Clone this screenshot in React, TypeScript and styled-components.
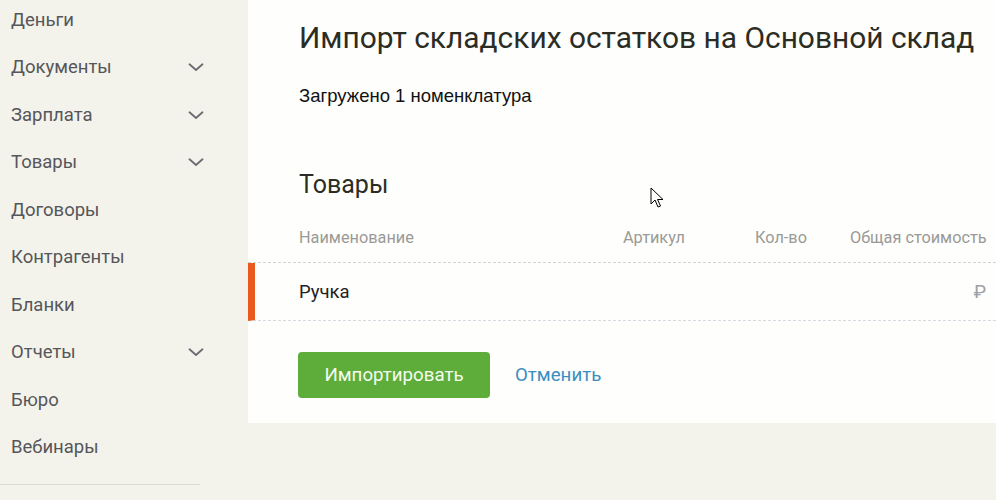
import React from "react";
import styled, { createGlobalStyle } from "styled-components";

const Global = createGlobalStyle`
  html, body { margin: 0; padding: 0; }
  body {
    background: #f3f3eb;
    font-family: Roboto, "Noto Sans", Arial, sans-serif;
    width: 996px;
    height: 500px;
    overflow: hidden;
  }
`;

const Page = styled.div`
  display: flex;
  align-items: flex-start;
  height: 500px;
  position: relative;
`;

const Sidebar = styled.nav`
  width: 248px;
  flex-shrink: 0;
  display: flex;
  flex-direction: column;
`;

const NavList = styled.div`
  width: 200px;
  display: flex;
  flex-direction: column;
  margin-top: -4px;
  border-bottom: 1px solid #dcdcd4;
  padding-bottom: 13px;
`;

const NavItem = styled.div`
  height: 47.5px;
  display: flex;
  align-items: center;
  justify-content: space-between;
  padding-left: 11px;
  box-sizing: border-box;
  font-size: 18.5px;
  color: #56565a;
`;

const Chevron = styled.svg`
  width: 20px;
  height: 20px;
  margin-right: -6px;
  color: #6c6c74;
`;

const Main = styled.main`
  flex: 1;
  background: #fefefc;
  height: 423px;
  display: flex;
  flex-direction: column;
`;

const Inner = styled.div`
  padding-left: 51px;
  display: flex;
  flex-direction: column;
`;

const Title = styled.h1`
  margin: 21px 0 0;
  font-size: 29.9px;
  font-weight: 400;
  color: #2b2d24;
  line-height: 34px;
  white-space: nowrap;
`;

const Subtitle = styled.p`
  margin: 30px 0 0;
  font-size: 18.5px;
  color: #111;
  line-height: 22px;
  font-family: "Liberation Sans", Arial, sans-serif;
`;

const SectionTitle = styled.h2`
  margin: 63px 0 0;
  font-size: 25px;
  font-weight: 400;
  color: #2b2d24;
  line-height: 30px;
`;

const Table = styled.div`
  margin-top: 12px;
  display: flex;
  flex-direction: column;
`;

const Grid = styled.div`
  display: grid;
  grid-template-columns: 324px 132px 95px 136px;
  padding-left: 51px;
  align-items: center;
`;

const HeadRow = styled(Grid)`
  height: 50px;
  font-size: 16.3px;
  color: #9a9a96;
  border-bottom: 1px dashed #d4d4d0;
`;

const BodyRow = styled(Grid)<{ $marked?: boolean }>`
  height: 57px;
  font-size: 18.5px;
  color: #22231f;
  border-bottom: 1px dashed #d8d8e0;
  border-left: 7px solid ${(p) => (p.$marked ? "#ea5a1f" : "transparent")};
  padding-left: 44px;
`;

const Cell = styled.div<{ $right?: boolean }>`
  text-align: ${(p) => (p.$right ? "right" : "left")};
  white-space: nowrap;
`;

const Ruble = styled.span`
  color: #a0a0a6;
  font-size: 19px;
`;

const Actions = styled.div`
  display: flex;
  align-items: center;
  gap: 25px;
  margin-top: 31px;
  padding-left: 50px;
`;

const PrimaryButton = styled.button`
  width: 192px;
  height: 46px;
  border: none;
  border-radius: 4px;
  background: #5ead3a;
  color: #f4fbef;
  font-family: Roboto, sans-serif;
  font-size: 18.7px;
  cursor: pointer;
`;

const LinkButton = styled.a`
  color: #3b8ec0;
  font-size: 18.7px;
  text-decoration: none;
`;

const Cursor = styled.svg`
  position: absolute;
  left: 650px;
  top: 187px;
  width: 14px;
  height: 22px;
`;

const ChevronIcon = () => (
  <Chevron viewBox="0 0 16 16" fill="none">
    <path d="M2.8 5.8 L8 10.4 L13.2 5.8" stroke="currentColor" strokeWidth="1.5" strokeLinecap="round" strokeLinejoin="round" />
  </Chevron>
);

const nav: { label: string; sub?: boolean }[] = [
  { label: "Деньги" },
  { label: "Документы", sub: true },
  { label: "Зарплата", sub: true },
  { label: "Товары", sub: true },
  { label: "Договоры" },
  { label: "Контрагенты" },
  { label: "Бланки" },
  { label: "Отчеты", sub: true },
  { label: "Бюро" },
  { label: "Вебинары" },
];

export default function App() {
  return (
    <>
      <Global />
      <Page>
        <Sidebar>
          <NavList>
            {nav.map((n) => (
              <NavItem key={n.label}>
                <span>{n.label}</span>
                {n.sub && <ChevronIcon />}
              </NavItem>
            ))}
          </NavList>
        </Sidebar>
        <Main>
          <Inner>
            <Title>Импорт складских остатков на Основной склад</Title>
            <Subtitle>Загружено 1 номенклатура</Subtitle>
            <SectionTitle>Товары</SectionTitle>
          </Inner>
          <Table>
            <HeadRow>
              <Cell>Наименование</Cell>
              <Cell>Артикул</Cell>
              <Cell>Кол-во</Cell>
              <Cell $right>Общая стоимость</Cell>
            </HeadRow>
            <BodyRow $marked>
              <Cell>Ручка</Cell>
              <Cell></Cell>
              <Cell></Cell>
              <Cell $right>
                <Ruble>₽</Ruble>
              </Cell>
            </BodyRow>
          </Table>
          <Actions>
            <PrimaryButton>Импортировать</PrimaryButton>
            <LinkButton>Отменить</LinkButton>
          </Actions>
        </Main>
        <Cursor viewBox="0 0 14 22">
          <path d="M1 1 L1 17 L5 13 L8 20 L10.5 19 L7.5 12.5 L13 12.5 Z" fill="#fff" stroke="#000" strokeWidth="1" strokeLinejoin="round" />
        </Cursor>
      </Page>
    </>
  );
}
